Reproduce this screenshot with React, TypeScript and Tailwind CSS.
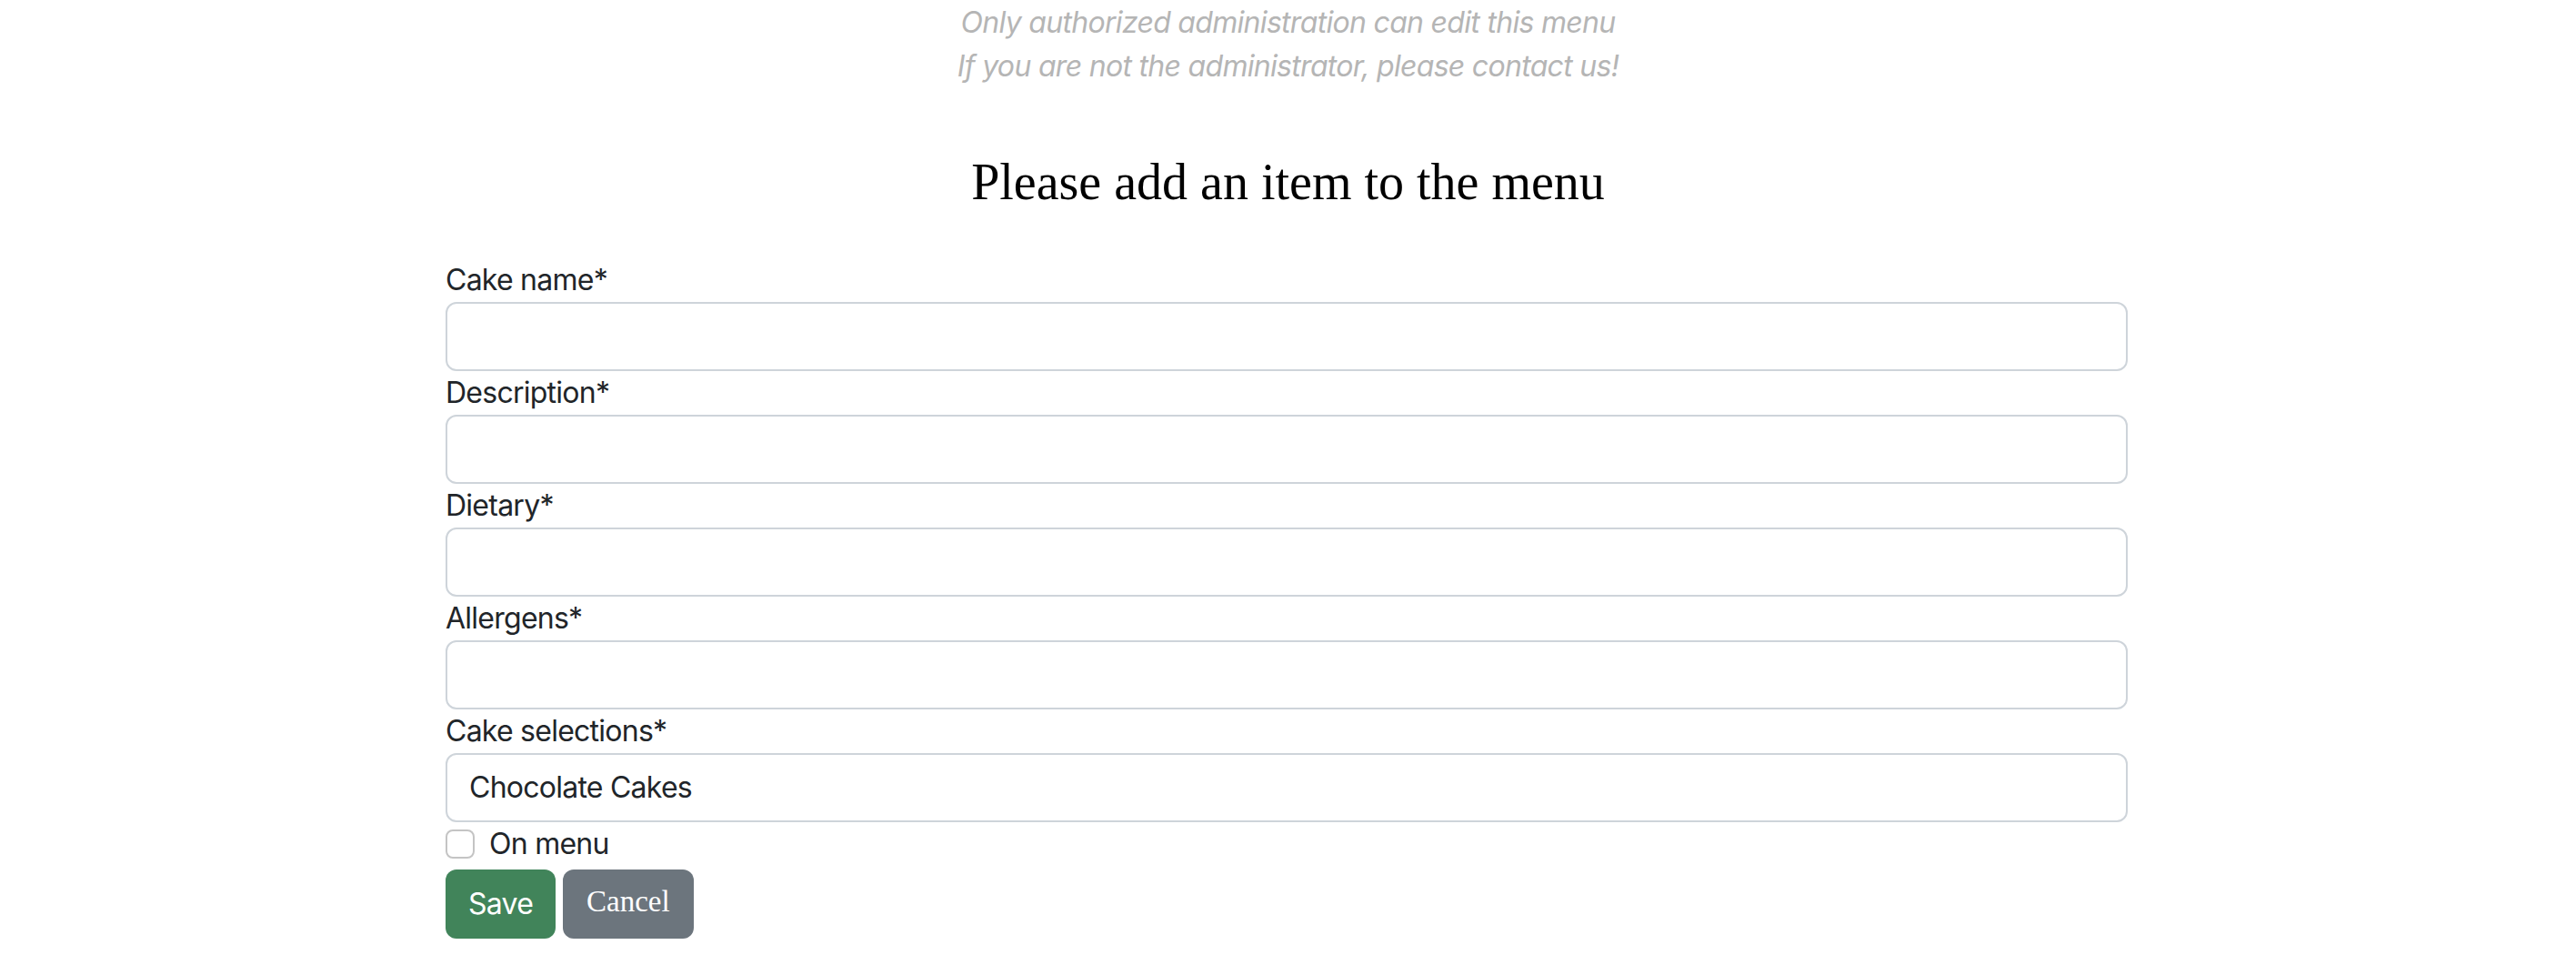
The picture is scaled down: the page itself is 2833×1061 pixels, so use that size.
import React from "react";

const sans = "font-['Inter','Liberation_Sans',sans-serif]";

function Field({ label, value }: { label: string; value?: string }) {
  return (
    <div className="flex flex-col">
      <label className="text-[32px] leading-[48px] text-[#212529] tracking-[-0.75px]">{label}</label>
      <div className="h-[76px] rounded-[12px] border-2 border-[#ced4da] bg-white px-[24px] flex items-center text-[32px] text-[#212529] tracking-[-0.75px]">
        {value}
      </div>
    </div>
  );
}

export default function App() {
  return (
    <div className={`min-h-[1061px] w-full bg-white ${sans}`}>
      <div className="flex flex-col items-center italic text-[#b5b5b5] text-[32px] leading-[48px] tracking-[-0.7px] pt-[1px]">
        <p>Only authorized administration can edit this menu</p>
        <p>If you are not the administrator, please contact us!</p>
      </div>
      <h2 className="mt-[70px] text-center font-['Liberation_Serif',serif] text-[56px] leading-[67px] text-black">
        Please add an item to the menu
      </h2>
      <div className="mx-auto mt-[50px] w-[1853px] pr-[3px] flex flex-col">
        <Field label="Cake name*" />
        <Field label="Description*" />
        <Field label="Dietary*" />
        <Field label="Allergens*" />
        <Field label="Cake selections*" value="Chocolate Cakes" />
        <div className="flex items-center h-[48px] gap-[16px]">
          <div className="w-[32px] h-[32px] rounded-[8px] border-2 border-[#c4c4c4] bg-white" />
          <span className="text-[32px] text-[#212529] tracking-[-0.75px]">On menu</span>
        </div>
        <div className="flex gap-[8px] mt-[4px]">
          <button className="h-[76px] px-[25px] rounded-[12px] bg-[#41845a] text-white text-[32px] tracking-[-0.75px]">
            Save
          </button>
          <button className="h-[76px] px-[26px] pb-[4px] rounded-[12px] bg-[#6c757d] text-white text-[33px] font-['Liberation_Serif',serif]">
            Cancel
          </button>
        </div>
      </div>
    </div>
  );
}
